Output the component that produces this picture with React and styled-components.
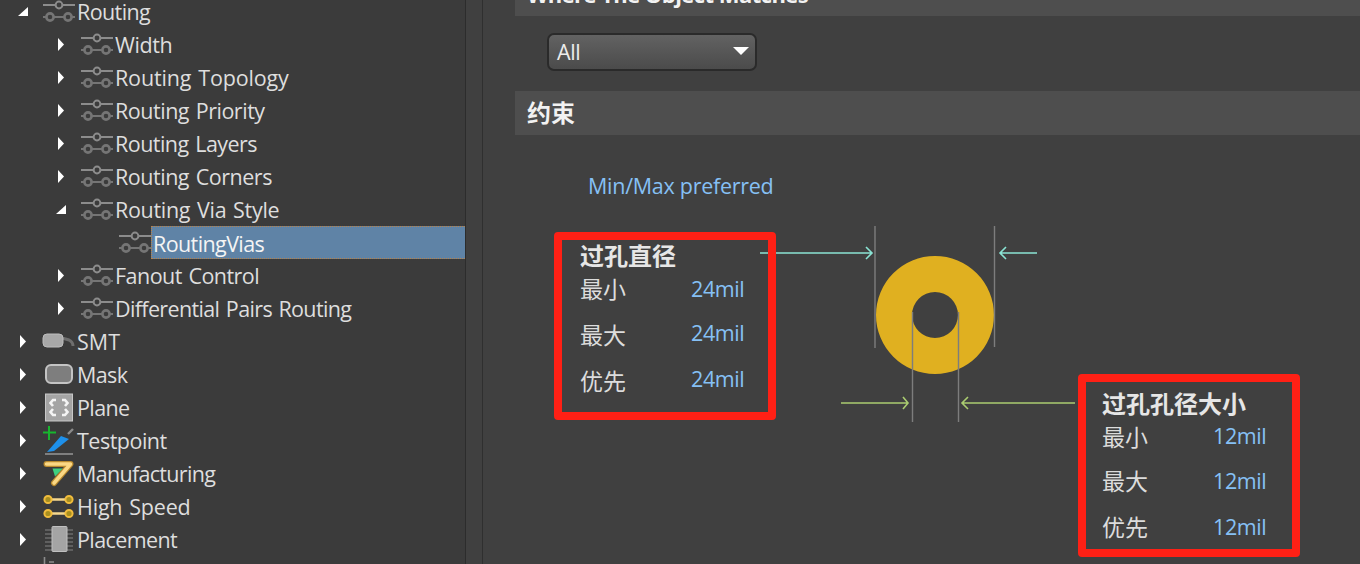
import React from 'react'
import styled, { createGlobalStyle } from 'styled-components'

const FONT = `"Open Sans", "Noto Sans CJK SC", sans-serif`

const GlobalStyle = createGlobalStyle`
    html, body {
        margin: 0;
        padding: 0;
        height: 100%;
        background: #404040;
        overflow: hidden;
    }
    #root {
        height: 100%;
    }
`

const Page = styled.div`
    display: flex;
    width: 1360px;
    height: 564px;
    overflow: hidden;
    font-family: ${FONT};
    color: #e2e2e2;
`

const Sidebar = styled.div`
    width: 465px;
    flex: none;
    background: #3b3b3b;
    border-right: 1px solid #2c2c2c;
    overflow: hidden;
`

const Tree = styled.ul`
    list-style: none;
    margin: -5px 0 0;
    padding: 0;
`

const Row = styled.li`
    display: flex;
    align-items: center;
    height: 33px;
    padding-left: ${(p) => 18 + p.$depth * 38}px;
`

const CaretSlot = styled.span`
    width: 24px;
    flex: none;
    display: flex;
    align-items: center;
`

const Caret = styled.span`
    display: block;
    background: #fff;
    width: ${(p) => (p.$open ? 10 : 6)}px;
    height: ${(p) => (p.$open ? 9 : 13)}px;
    margin-left: ${(p) => (p.$open ? 0 : 2)}px;
    clip-path: ${(p) => (p.$open ? 'polygon(100% 0, 100% 100%, 0 100%)' : 'polygon(0 0, 100% 50%, 0 100%)')};
`

const IconSlot = styled.svg`
    width: 33px;
    height: 33px;
    flex: none;
    display: block;
    overflow: visible;
`

const Label = styled.span`
    flex: 1;
    box-sizing: border-box;
    height: 33px;
    line-height: ${(p) => (p.$selected ? 33 : 31)}px;
    padding-left: 1px;
    font-size: 21.5px;
    font-kerning: none;
    letter-spacing: ${(p) => -0.6 + (p.$track || 0)}px;
    word-spacing: 1.5px;
    white-space: nowrap;
    border: 1px dotted ${(p) => (p.$selected ? '#b8834a' : 'transparent')};
    border-right: none;
    background: ${(p) => (p.$selected ? '#5f83a6' : 'transparent')};
    color: ${(p) => (p.$selected ? '#f4f4f4' : '#dedede')};
`

const Gutter = styled.div`
    width: 16px;
    flex: none;
    background: #404040;
    border-right: 1px solid #2f2f2f;
`

const Main = styled.div`
    flex: 1;
    padding-left: 32px;
    background: #404040;
    overflow: hidden;
`

const SectionBar = styled.h2`
    margin: ${(p) => p.$top || 0}px 0 0;
    height: 44px;
    line-height: 44px;
    padding-left: 12px;
    background: #4e4e4e;
    font-size: ${(p) => (p.$latin ? 22 : 24)}px;
    letter-spacing: ${(p) => (p.$latin ? -0.55 : 0)}px;
    font-weight: 700;
    color: #f2f2f2;
`

const SelectRow = styled.div`
    padding: 17px 0 20px 32px;
`

const Select = styled.div`
    width: 210px;
    height: 38px;
    box-sizing: border-box;
    display: flex;
    align-items: center;
    justify-content: space-between;
    padding: 0 6px 2px 8px;
    border: 2px solid #2a2a2a;
    border-radius: 7px;
    background: linear-gradient(#626262, #4b4b4b);
    font-size: 21.5px;
    letter-spacing: -0.4px;
    color: #ececec;
`

const SelectArrow = styled.span`
    width: 16px;
    height: 8px;
    background: #fff;
    clip-path: polygon(0 0, 100% 0, 50% 100%);
`

const Canvas = styled.div`
    position: relative;
    height: 429px;
`

const Rule = styled.div`
    position: absolute;
    left: 73px;
    top: 36px;
    font-size: 21.5px;
    letter-spacing: -0.27px;
    color: #86c0f5;
`

const Drawing = styled.svg`
    position: absolute;
    left: 225px;
    top: 85px;
    width: 360px;
    height: 210px;
`

const SpecBox = styled.div`
    position: absolute;
    left: ${(p) => p.$x}px;
    top: ${(p) => p.$y}px;
    width: 222px;
    height: ${(p) => p.$h}px;
    box-sizing: border-box;
    padding-left: ${(p) => p.$pad}px;
    border: 8px solid #ff2015;
    border-radius: 4px;
`

const SpecTitle = styled.div`
    height: 22px;
    margin-top: ${(p) => p.$top}px;
    margin-bottom: -2px;
    line-height: 22px;
    font-size: 24px;
    font-weight: 700;
    color: #e6e6e6;
`

const SpecRow = styled.div`
    display: grid;
    grid-template-columns: 111px auto;
    align-items: center;
    height: ${(p) => p.$h}px;
`

const SpecName = styled.span`
    font-size: 23px;
    color: #dcdcdc;
`

const SpecValue = styled.span`
    font-size: 21.5px;
    letter-spacing: -0.4px;
    margin-top: ${(p) => p.$lift}px;
    color: #86c0f5;
`

const Sliders = () => (
    <g fill="none">
        <path d="M1 10H13M21 10H33" stroke="#8c8c8c" strokeWidth="2" />
        <circle cx="17" cy="10" r="3.4" stroke="#8c8c8c" strokeWidth="2" />
        <path d="M1 22H4M12 22H22M30 22H33" stroke="#757575" strokeWidth="2" />
        <circle cx="8" cy="22" r="3.6" stroke="#757575" strokeWidth="2.6" />
        <circle cx="26" cy="22" r="3.6" stroke="#757575" strokeWidth="2.6" />
    </g>
)

const Smt = () => (
    <g>
        <path d="M20 13L27 15Q31 17 31 21" fill="none" stroke="#6e6e6e" strokeWidth="3" />
        <rect x="1" y="9" width="20" height="13" rx="4" fill="#a8a8a8" stroke="#bdbdbd" />
    </g>
)

const Mask = () => <rect x="4" y="7" width="26" height="18" rx="5" fill="#7e7e7e" stroke="#c4c4c4" strokeWidth="2" />

const Plane = () => (
    <g>
        <rect x="3.5" y="3" width="27" height="27" fill="#a4a4a4" stroke="#c8c8c8" />
        <path
            d="M14 9H11L8.5 12L11 15M20 9H23L25.5 12L23 15M14 24H11L8.5 21L11 18M20 24H23L25.5 21L23 18"
            fill="none"
            stroke="#f4f4f4"
            strokeWidth="2.6"
        />
    </g>
)

const Testpoint = () => (
    <g>
        <path d="M7 2V16M1 8.5H14" stroke="#17b62e" strokeWidth="2" />
        <path d="M3 30H31" stroke="#c4c4c4" strokeWidth="1" />
        <path d="M5 28L19 12L27 15L12 27Z" fill="#1e90ea" />
        <path d="M26 10L31 5" stroke="#8a8a8a" strokeWidth="2.4" />
    </g>
)

const Manufacturing = () => (
    <g fill="none" strokeLinejoin="round" strokeLinecap="round">
        <path d="M10.5 11.5H21L13 19.5Z" fill="#3fd07f" />
        <path d="M4.5 7H28.5L12 26" stroke="#b98a2e" strokeWidth="6" />
        <path d="M4.5 7H28.5L12 26" stroke="#fbd884" strokeWidth="3.6" />
    </g>
)

const HighSpeed = () => (
    <g fill="#a88f20" stroke="#f0bc3c" strokeWidth="2">
        <path d="M9 9.5H24M9 23.5H24" fill="none" stroke="#f6d88e" strokeWidth="2.5" />
        <circle cx="6" cy="9.5" r="3.6" />
        <circle cx="27" cy="9.5" r="3.6" />
        <circle cx="6" cy="23.5" r="3.6" />
        <circle cx="27" cy="23.5" r="3.6" />
    </g>
)

const Placement = () => (
    <g>
        <path d="M3 7H31M3 11H31M3 15H31M3 19H31M3 23H31M3 27H31" stroke="#6c6c6c" strokeWidth="1.6" />
        <rect x="10" y="3.5" width="15" height="25" rx="1" fill="#a4a4a4" stroke="#c0c0c0" />
    </g>
)

const Stub = () => <path d="M2.5 1V12M7 6H12" fill="none" stroke="#8c8c8c" strokeWidth="1.6" />

const icons = {
    sliders: Sliders,
    smt: Smt,
    mask: Mask,
    plane: Plane,
    testpoint: Testpoint,
    manufacturing: Manufacturing,
    highspeed: HighSpeed,
    placement: Placement,
    stub: Stub,
}

// track nudges the spacing where a label runs shorter than in the reference
const treeItems = [
    { name: 'Routing', depth: 0, icon: 'sliders', open: true },
    { name: 'Width', depth: 1, icon: 'sliders', track: 0.2 },
    { name: 'Routing Topology', depth: 1, icon: 'sliders', track: 0.45 },
    { name: 'Routing Priority', depth: 1, icon: 'sliders', track: 0.13 },
    { name: 'Routing Layers', depth: 1, icon: 'sliders', track: 0.07 },
    { name: 'Routing Corners', depth: 1, icon: 'sliders', track: 0.13 },
    { name: 'Routing Via Style', depth: 1, icon: 'sliders', track: 0.3, open: true },
    { name: 'RoutingVias', depth: 2, icon: 'sliders', leaf: true, selected: true },
    { name: 'Fanout Control', depth: 1, icon: 'sliders', track: 0.07 },
    { name: 'Differential Pairs Routing', depth: 1, icon: 'sliders', track: -0.04 },
    { name: 'SMT', depth: 0, icon: 'smt', track: 0.6 },
    { name: 'Mask', depth: 0, icon: 'mask' },
    { name: 'Plane', depth: 0, icon: 'plane' },
    { name: 'Testpoint', depth: 0, icon: 'testpoint', track: 0.1 },
    { name: 'Manufacturing', depth: 0, icon: 'manufacturing', track: -0.08 },
    { name: 'High Speed', depth: 0, icon: 'highspeed', track: 0.4 },
    { name: 'Placement', depth: 0, icon: 'placement' },
    { name: '', depth: 0, icon: 'stub', leaf: true },
]

const TreeRow = ({ item }) => {
    const Icon = icons[item.icon]
    return (
        <Row $depth={item.depth}>
            <CaretSlot>{!item.leaf && <Caret $open={item.open} />}</CaretSlot>
            <IconSlot viewBox="0 0 33 33">
                <Icon />
            </IconSlot>
            <Label $selected={item.selected} $track={item.track}>{item.name}</Label>
        </Row>
    )
}

const Spec = ({ title, value, x, y, h, pad, titleTop, rows, lifts }) => (
    <SpecBox $x={x} $y={y} $h={h} $pad={pad}>
        <SpecTitle $top={titleTop}>{title}</SpecTitle>
        {['最小', '最大', '优先'].map((name, i) => (
            <SpecRow key={name} $h={rows[i]}>
                <SpecName>{name}</SpecName>
                <SpecValue $lift={lifts[i]}>{value}</SpecValue>
            </SpecRow>
        ))}
    </SpecBox>
)

const ViaDrawing = () => (
    <Drawing viewBox="740 220 360 210">
        <path fillRule="evenodd" fill="#e0b020" d="M876 315a59 59 0 1 0 118 0a59 59 0 1 0 -118 0ZM912 315a23 23 0 1 0 46 0a23 23 0 1 0 -46 0Z" />
        <g stroke="#7d7d7d" strokeWidth="1.4" fill="none">
            <path d="M875 226V348M994.5 226V347" />
            <path d="M912.5 312V422M958.5 312V422" />
        </g>
        <g stroke="#8ae4d4" strokeWidth="1.6" fill="none">
            <path d="M760 253H871M866 247L872 253L866 259" />
            <path d="M1000 253H1037M1006 247L1000 253L1006 259" />
        </g>
        <g stroke="#aacc70" strokeWidth="1.6" fill="none">
            <path d="M841 403H907M903 397L908 403L903 409" />
            <path d="M963 403H1075M968 397L962 403L968 409" />
        </g>
    </Drawing>
)

const App = () => (
    <Page>
        <GlobalStyle />
        <Sidebar>
            <Tree>
                {treeItems.map((item, i) => (
                    <TreeRow key={i} item={item} />
                ))}
            </Tree>
        </Sidebar>
        <Gutter />
        <Main>
            <SectionBar $top={-28} $latin>Where The Object Matches</SectionBar>
            <SelectRow>
                <Select>
                    All
                    <SelectArrow />
                </Select>
            </SelectRow>
            <SectionBar>约束</SectionBar>
            <Canvas>
                <Rule>Min/Max preferred</Rule>
                <ViaDrawing />
                <Spec title="过孔直径" value="24mil" x={39} y={97} h={188} pad={18} titleTop={5} rows={[46, 46, 46]} lifts={[0, -4, -4]} />
                <Spec title="过孔孔径大小" value="12mil" x={563} y={239} h={183} pad={16} titleTop={11} rows={[46, 42, 50]} lifts={[-2, 0, 0]} />
            </Canvas>
        </Main>
    </Page>
)

export default App
